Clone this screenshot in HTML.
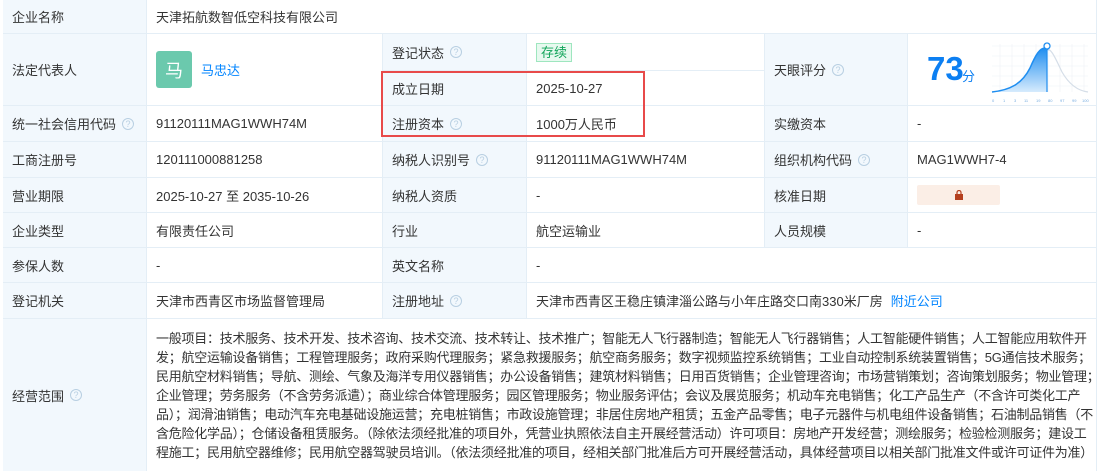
<!DOCTYPE html>
<html><head><meta charset="utf-8"><style>
*{margin:0;padding:0;box-sizing:border-box}
body{width:1105px;height:471px;background:#fff;font-family:"Liberation Sans","Noto Sans CJK SC",sans-serif;font-size:13px;color:#333;position:relative;overflow:hidden}
.c{position:absolute;display:flex;align-items:center;padding-left:9px;border-right:1px solid #e4eef6;border-bottom:1px solid #e4eef6}
.l{background:#f2f8fd}
.q{display:inline-block;width:12px;height:12px;border:1px solid #b8cfe2;border-radius:50%;color:#b8cfe2;font-size:9px;line-height:10px;text-align:center;margin-left:6px}
.sc div{white-space:nowrap;letter-spacing:-0.25px;height:19px;line-height:19px}
</style></head><body>
<div style="position:absolute;left:3px;top:0;width:1094px;height:471px;border-left:1px solid #e4eef6;border-right:1px solid #e4eef6"></div>

<div class="c l" style="left:3px;top:0;width:144px;height:34px">企业名称</div>
<div class="c" style="left:147px;top:0;width:950px;height:34px">天津拓航数智低空科技有限公司</div>

<div class="c l" style="left:3px;top:34px;width:144px;height:72px">法定代表人</div>
<div class="c" style="left:147px;top:34px;width:236px;height:72px"><div style="width:36px;height:37px;background:#6bc9ad;border-radius:3px;color:#fff;font-size:18px;display:flex;align-items:center;justify-content:center">马</div><span style="color:#0084ff;margin-left:9px">马忠达</span></div>
<div class="c l" style="left:383px;top:34px;width:144px;height:37px">登记状态<span class="q">?</span></div>
<div class="c" style="left:527px;top:34px;width:238px;height:37px"><span style="background:#e7f9ef;border:1px solid #9ee6bf;color:#12a55a;padding:0 4px;line-height:17px">存续</span></div>
<div class="c l" style="left:383px;top:71px;width:144px;height:35px">成立日期</div>
<div class="c" style="left:527px;top:71px;width:238px;height:35px">2025-10-27</div>
<div class="c l" style="left:765px;top:34px;width:143px;height:72px">天眼评分<span class="q">?</span></div>
<div class="c" style="left:908px;top:34px;width:189px;height:72px">
<span style="position:absolute;left:19px;top:16px;font-size:33px;font-weight:bold;color:#0c7ff2">73</span>
<span style="position:absolute;left:54px;top:32px;font-size:13px;color:#0c7ff2">分</span>
<svg style="position:absolute;left:82px;top:6px" width="100" height="64" viewBox="0 0 100 64">
<g stroke="#eef2f7" stroke-width="0.6">
<path d="M2 6H98M2 16H98M2 26H98M2 36H98M2 46H98M10 4V52M22 4V52M34 4V52M46 4V52M58 4V52M70 4V52M82 4V52M94 4V52"/></g>
<defs><linearGradient id="g" x1="0" y1="0" x2="0" y2="1"><stop offset="0" stop-color="#1f8ef0"/><stop offset="1" stop-color="#d6ebfd"/></linearGradient></defs>
<path d="M2 52C20 50 32 44 40 28C46 14 50 8 55 8C59 8 62 11 57 10L57 52Z" fill="url(#g)"/>
<path d="M2 52C20 50 32 44 40 28C46 14 50 8 55 8" fill="none" stroke="#1f8ef0" stroke-width="1.5"/>
<path d="M55 8C62 8 66 20 72 32C80 46 90 51 98 52" fill="none" stroke="#d5dee8" stroke-width="1.2"/>
<path d="M57 8V52" stroke="#1f8ef0" stroke-width="1.2"/>
<circle cx="57" cy="6" r="3" fill="#fff" stroke="#1f8ef0" stroke-width="1.3"/>
<text x="2" y="62" font-size="4" fill="#7aaee0">0</text><text x="13" y="62" font-size="4" fill="#7aaee0">1</text><text x="24" y="62" font-size="4" fill="#7aaee0">3</text><text x="34" y="62" font-size="4" fill="#7aaee0">11</text><text x="46" y="62" font-size="4" fill="#7aaee0">19</text><text x="58" y="62" font-size="4" fill="#7aaee0">80</text><text x="70" y="62" font-size="4" fill="#7aaee0">97</text><text x="82" y="62" font-size="4" fill="#7aaee0">99</text><text x="92" y="62" font-size="4" fill="#7aaee0">100</text>
</svg></div>

<div class="c l" style="left:3px;top:106px;width:144px;height:36px">统一社会信用代码<span class="q">?</span></div>
<div class="c" style="left:147px;top:106px;width:236px;height:36px">91120111MAG1WWH74M</div>
<div class="c l" style="left:383px;top:106px;width:144px;height:36px">注册资本<span class="q">?</span></div>
<div class="c" style="left:527px;top:106px;width:238px;height:36px">1000万人民币</div>
<div class="c l" style="left:765px;top:106px;width:143px;height:36px">实缴资本</div>
<div class="c" style="left:908px;top:106px;width:189px;height:36px">-</div>

<div class="c l" style="left:3px;top:142px;width:144px;height:36px">工商注册号</div>
<div class="c" style="left:147px;top:142px;width:236px;height:36px">120111000881258</div>
<div class="c l" style="left:383px;top:142px;width:144px;height:36px">纳税人识别号<span class="q">?</span></div>
<div class="c" style="left:527px;top:142px;width:238px;height:36px">91120111MAG1WWH74M</div>
<div class="c l" style="left:765px;top:142px;width:143px;height:36px">组织机构代码<span class="q">?</span></div>
<div class="c" style="left:908px;top:142px;width:189px;height:36px">MAG1WWH7-4</div>

<div class="c l" style="left:3px;top:178px;width:144px;height:35px">营业期限</div>
<div class="c" style="left:147px;top:178px;width:236px;height:35px">2025-10-27 至 2035-10-26</div>
<div class="c l" style="left:383px;top:178px;width:144px;height:35px">纳税人资质</div>
<div class="c" style="left:527px;top:178px;width:238px;height:35px">-</div>
<div class="c l" style="left:765px;top:178px;width:143px;height:35px">核准日期</div>
<div class="c" style="left:908px;top:178px;width:189px;height:35px"><div style="width:83px;height:20px;background:#fbeee6;border-radius:2px;display:flex;justify-content:center;align-items:center"><svg width="10" height="10" viewBox="0 0 10 10"><path d="M3 4V2.5a2 2 0 0 1 4 0V4" fill="none" stroke="#b5401f" stroke-width="1.2"/><rect x="1" y="4" width="8" height="6" fill="#b5401f"/></svg></div></div>

<div class="c l" style="left:3px;top:213px;width:144px;height:35px">企业类型</div>
<div class="c" style="left:147px;top:213px;width:236px;height:35px">有限责任公司</div>
<div class="c l" style="left:383px;top:213px;width:144px;height:35px">行业</div>
<div class="c" style="left:527px;top:213px;width:238px;height:35px">航空运输业</div>
<div class="c l" style="left:765px;top:213px;width:143px;height:35px">人员规模</div>
<div class="c" style="left:908px;top:213px;width:189px;height:35px">-</div>

<div class="c l" style="left:3px;top:248px;width:144px;height:35px">参保人数</div>
<div class="c" style="left:147px;top:248px;width:236px;height:35px">-</div>
<div class="c l" style="left:383px;top:248px;width:144px;height:35px">英文名称</div>
<div class="c" style="left:527px;top:248px;width:570px;height:35px">-</div>

<div class="c l" style="left:3px;top:283px;width:144px;height:36px">登记机关</div>
<div class="c" style="left:147px;top:283px;width:236px;height:36px">天津市西青区市场监督管理局</div>
<div class="c l" style="left:383px;top:283px;width:144px;height:36px">注册地址<span class="q">?</span></div>
<div class="c" style="left:527px;top:283px;width:570px;height:36px">天津市西青区王稳庄镇津淄公路与小年庄路交口南330米厂房<span style="color:#0084ff;margin-left:8px">附近公司</span></div>

<div class="c l" style="left:3px;top:319px;width:144px;height:152px;border-bottom:none">经营范围<span class="q">?</span></div>
<div class="c sc" style="left:147px;top:319px;width:950px;height:152px;border-bottom:none;flex-direction:column;align-items:flex-start;padding-top:10px;overflow:hidden">
<div>一般项目：技术服务、技术开发、技术咨询、技术交流、技术转让、技术推广；智能无人飞行器制造；智能无人飞行器销售；人工智能硬件销售；人工智能应用软件开</div>
<div>发；航空运输设备销售；工程管理服务；政府采购代理服务；紧急救援服务；航空商务服务；数字视频监控系统销售；工业自动控制系统装置销售；5G通信技术服务；</div>
<div>民用航空材料销售；导航、测绘、气象及海洋专用仪器销售；办公设备销售；建筑材料销售；日用百货销售；企业管理咨询；市场营销策划；咨询策划服务；物业管理；</div>
<div>企业管理；劳务服务（不含劳务派遣）；商业综合体管理服务；园区管理服务；物业服务评估；会议及展览服务；机动车充电销售；化工产品生产（不含许可类化工产</div>
<div>品）；润滑油销售；电动汽车充电基础设施运营；充电桩销售；市政设施管理；非居住房地产租赁；五金产品零售；电子元器件与机电组件设备销售；石油制品销售（不</div>
<div>含危险化学品）；仓储设备租赁服务。（除依法须经批准的项目外，凭营业执照依法自主开展经营活动）许可项目：房地产开发经营；测绘服务；检验检测服务；建设工</div>
<div>程施工；民用航空器维修；民用航空器驾驶员培训。（依法须经批准的项目，经相关部门批准后方可开展经营活动，具体经营项目以相关部门批准文件或许可证件为准）</div>
</div>

<div style="position:absolute;left:381px;top:71px;width:264px;height:66px;border:2px solid #e84a4a"></div>
</body></html>
